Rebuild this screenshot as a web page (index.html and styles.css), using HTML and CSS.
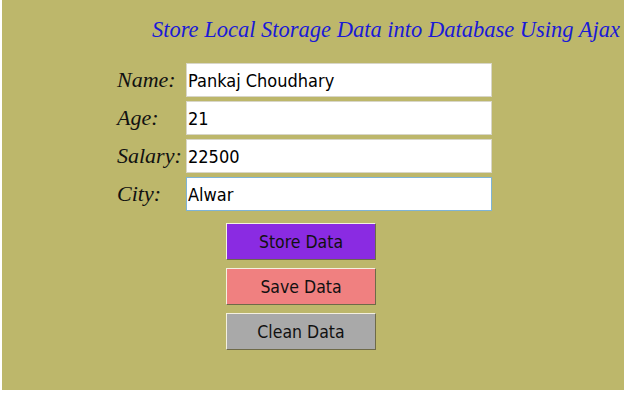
FILE: index.html
```html
<!DOCTYPE html>
<html>
<head>
<meta charset="utf-8">
<link rel="stylesheet" href="styles.css">
</head>
<body>
<div class="page">
  <h1 class="title">Store Local Storage Data into Database Using Ajax</h1>
  <form class="form">
    <label class="label">Name:</label><input class="field" type="text" value="Pankaj Choudhary">
    <label class="label">Age:</label><input class="field" type="text" value="21">
    <label class="label">Salary:</label><input class="field" type="text" value="22500">
    <label class="label">City:</label><input class="field focus" type="text" value="Alwar">
  </form>
  <div class="buttons">
    <button class="btn store" type="button">Store Data</button>
    <button class="btn save" type="button">Save Data</button>
    <button class="btn clean" type="button">Clean Data</button>
  </div>
</div>
</body>
</html>
```
FILE: styles.css
```css
html, body {
  margin: 0;
  padding: 0;
  background: #ffffff;
}
.page {
  margin-left: 2px;
  width: 622px;
  height: 390px;
  background: #bdb76b;
  box-sizing: border-box;
  padding-top: 16px;
}
.title {
  margin: 0;
  font-family: "Liberation Serif", serif;
  font-style: italic;
  font-weight: normal;
  font-size: 22.5px;
  line-height: 28px;
  color: #1a1ad6;
  text-align: right;
  padding-right: 4px;
}
.form {
  margin: 19px 0 0 115px;
  display: grid;
  grid-template-columns: 69px 306px;
  row-gap: 4px;
  align-items: center;
}
.label {
  font-family: "Liberation Serif", serif;
  font-style: italic;
  font-size: 22px;
  color: #111;
}
.field {
  width: 306px;
  height: 34px;
  box-sizing: border-box;
  margin: 0;
  border: 1px solid #d8d6c8;
  background: #fff;
  padding: 0 1px;
  font-family: "DejaVu Sans Condensed", "DejaVu Sans", sans-serif;
  font-size: 18px;
  color: #000;
  outline: none;
}
.field.focus {
  border: 1px solid #7eb4d6;
}
.buttons {
  margin: 12px 0 0 224px;
  display: flex;
  flex-direction: column;
  gap: 8px;
  width: 150px;
}
.btn {
  width: 150px;
  height: 37px;
  margin: 0;
  box-sizing: border-box;
  border: 1px solid;
  border-color: #f4f0e0 #6e6a48 #6e6a48 #f4f0e0;
  font-family: "DejaVu Sans Condensed", "DejaVu Sans", sans-serif;
  font-size: 17.5px;
  color: #111;
  padding: 0;
}
.store { background: #8a2be2; }
.save { background: #f08080; }
.clean { background: #a9a9a9; }
```
